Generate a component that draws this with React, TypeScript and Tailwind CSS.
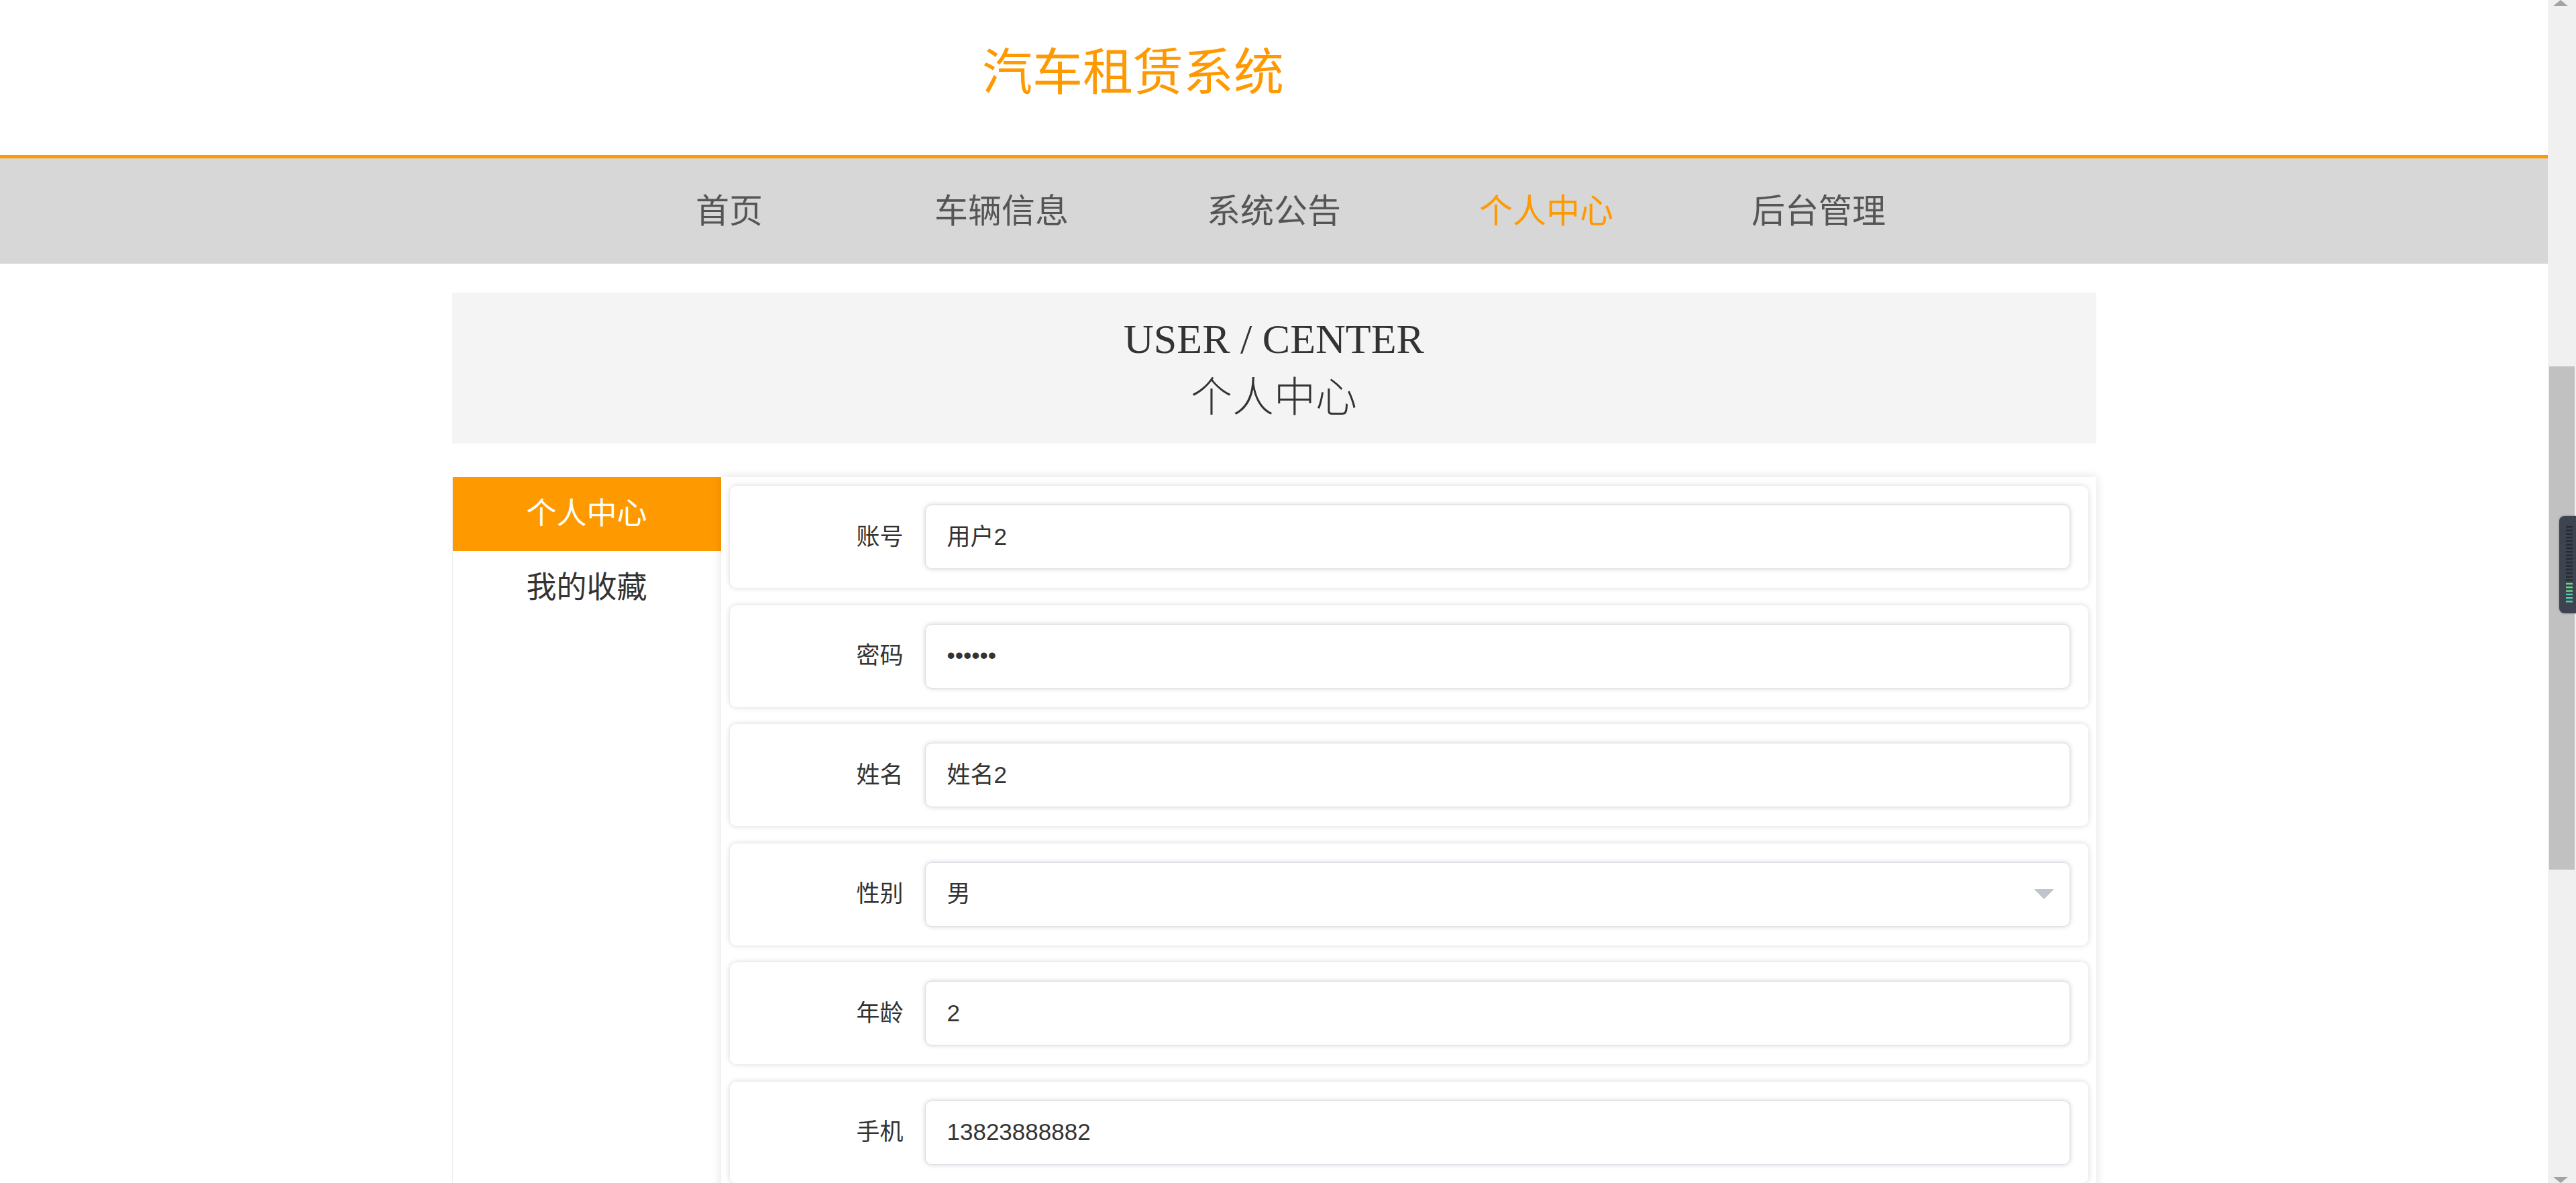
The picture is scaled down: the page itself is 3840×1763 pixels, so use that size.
const navItems = ["首页", "车辆信息", "系统公告", "个人中心", "后台管理"];

const fields = [
  { label: "账号", value: "用户2" },
  { label: "密码", value: "••••••" },
  { label: "姓名", value: "姓名2" },
  { label: "性别", value: "男", select: true },
  { label: "年龄", value: "2" },
  { label: "手机", value: "13823888882" },
];

const ScrollBar = () => {
  return (
    <div className="relative w-[42px] shrink-0 bg-[#f0f0f0]">
      <svg className="absolute left-[8px] top-0" width="22" height="9" viewBox="0 0 22 9">
        <polygon points="0,9 22,9 11,0" fill="#a3a3a3" />
      </svg>
      <div className="absolute left-[2px] right-[2px] top-[546px] h-[750px] bg-[#c1c1c1]" />
      <svg className="absolute left-[8px] bottom-0" width="22" height="9" viewBox="0 0 22 9">
        <polygon points="0,0 22,0 11,9" fill="#a3a3a3" />
      </svg>
    </div>
  );
};

const Widget = () => {
  const bars = Array.from({ length: 22 }, (_, i) => i);
  return (
    <div className="absolute right-0 top-[769px] h-[145px] w-[25px] rounded-l-[8px] bg-[#3d4450] shadow-[0_0_3px_rgba(0,0,0,0.4)]">
      <svg className="absolute left-[10px] top-[15px]" width="10" height="116" viewBox="0 0 10 116">
        {bars.map((i) => (
          <rect
            key={i}
            x="0"
            y={i * 5.3}
            width="10"
            height="2.4"
            fill={i >= 16 ? (i >= 19 ? "#4fd1b0" : "#6bd48a") : "#262b33"}
          />
        ))}
      </svg>
    </div>
  );
};

const FormRow = ({ label, value, select }: { label: string; value: string; select?: boolean }) => {
  return (
    <div className="flex h-[152px] items-center rounded-[10px] bg-white shadow-[0_0_8px_rgba(0,0,0,0.16)]">
      <div className="w-[259px] shrink-0 text-right text-[35px] text-[#333]">{label}</div>
      <div className="ml-[32px] mr-[27px] flex h-[96px] flex-1 items-center justify-between rounded-[10px] border border-[#dcdfe6] bg-white pl-[32px] pr-[23px] text-[35px] text-[#333] shadow-[0_0_7px_rgba(0,0,0,0.18)]">
        <span>{value}</span>
        {select && (
          <svg width="30" height="15" viewBox="0 0 30 15">
            <polygon points="0,0 30,0 15,15" fill="#c0c4cc" />
          </svg>
        )}
      </div>
    </div>
  );
};

export default function App() {
  return (
    <div className="relative flex h-[1763px] w-full overflow-hidden bg-white font-['Liberation_Sans','Noto_Sans_CJK_SC',sans-serif]">
      <div className="flex-1">
        {/* header */}
        <div className="h-[236px] border-b-[5px] border-[#ff9900] bg-white">
          <div className="mx-auto w-[2450px] pl-[790px] pt-[71px] text-[75px] leading-none text-[#ff9900]">
            汽车租赁系统
          </div>
        </div>

        {/* nav */}
        <div className="flex h-[157px] items-center justify-center bg-[#d7d7d7]">
          {navItems.map((item) => (
            <div
              key={item}
              className={
                item === "个人中心"
                  ? "w-[406px] text-center text-[50px] leading-none text-[#ff9900]"
                  : "w-[406px] text-center text-[50px] leading-none text-[#555]"
              }
            >
              {item}
            </div>
          ))}
        </div>

        <div className="mx-auto w-[2451px]">
          {/* title banner */}
          <div className="mt-[43px] h-[225px] bg-[#f4f4f4] pt-[25px] text-center font-['Liberation_Serif','Noto_Sans_CJK_SC',serif] text-[62px] leading-[88px] text-[#333]">
            <div>USER / CENTER</div>
            <div className="font-light">个人中心</div>
          </div>

          <div className="mt-[50px] flex">
            {/* side menu */}
            <div className="h-[1100px] w-[401px] shrink-0 border-l border-[#eee] bg-white">
              <div className="flex h-[110px] items-center justify-center bg-[#ff9900] text-[45px] text-white">
                个人中心
              </div>
              <div className="flex h-[110px] items-center justify-center text-[45px] text-[#333]">
                我的收藏
              </div>
            </div>

            {/* form panel */}
            <div className="relative z-10 flex flex-1 flex-col gap-[25.5px] bg-white pl-[13px] pr-[12px] pt-[13px] pb-[40px] shadow-[0_0_14px_rgba(0,0,0,0.12)]">
              {fields.map((f) => (
                <FormRow key={f.label} label={f.label} value={f.value} select={f.select} />
              ))}
            </div>
          </div>
        </div>
      </div>
      <ScrollBar />
      <Widget />
    </div>
  );
}
